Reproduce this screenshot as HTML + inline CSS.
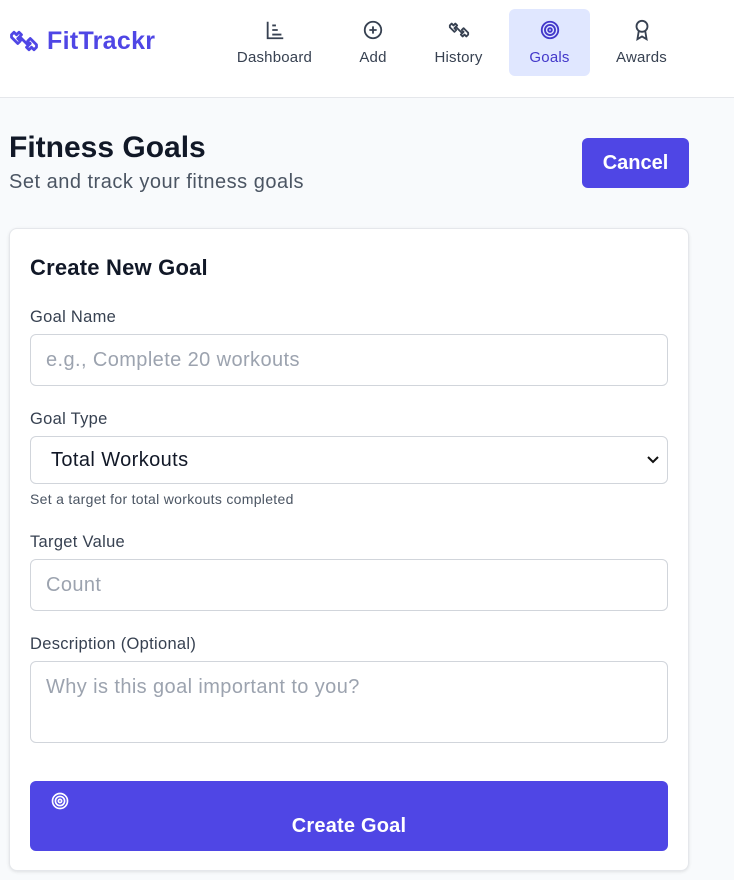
<!DOCTYPE html>
<html><head><style>
*{box-sizing:border-box;margin:0;padding:0}
body{width:734px;height:880px;overflow:hidden;background:#f8fafc;font-family:"Liberation Sans",sans-serif;color:#111827}
.hdr{height:98px;background:#fff;border-bottom:1px solid #e5e7eb;position:relative}
.logo{position:absolute;left:9px;top:26px;display:flex;align-items:center;gap:8px;color:#4f46e5;font-weight:bold;font-size:25px;letter-spacing:0.3px}
.nav{position:absolute;top:9px;left:0;width:734px}
.it{position:absolute;top:0;height:67px;text-align:center;font-size:15px;color:#374151;letter-spacing:0.2px}
.it svg{position:absolute;top:10px;left:50%;margin-left:-11px}
.it span{position:absolute;top:40px;left:0;right:0}
.act{background:#e0e7ff;border-radius:6px;color:#4338ca}
h1{position:absolute;left:9px;top:131px;font-size:30px;font-weight:bold}
.sub{position:absolute;left:9px;top:171px;font-size:20px;color:#4b5563;letter-spacing:0.5px}
.cancel{position:absolute;left:582px;top:138px;width:107px;height:50px;background:#4f46e5;color:#fff;border-radius:6px;font-size:20px;text-align:center;line-height:50px;font-weight:bold}
.card{position:absolute;left:9px;top:228px;width:680px;height:643px;background:#fff;border:1px solid #e5e7eb;border-radius:8px;box-shadow:0 1px 3px rgba(0,0,0,.1)}
.t{position:absolute;left:20px;font-size:22px;font-weight:bold;top:26px;letter-spacing:0.2px}
.l{position:absolute;left:20px;font-size:16.5px;color:#374151;letter-spacing:0.3px}
.in{position:absolute;left:20px;width:638px;border:1px solid #d1d5db;border-radius:6px;font-size:20px;color:#9ca3af;padding-left:15px;letter-spacing:0.4px}
.btn{position:absolute;left:20px;top:552px;width:638px;height:70px;background:#4f46e5;border-radius:6px;color:#fff;font-size:20px;text-align:center;font-weight:bold;letter-spacing:0.2px}
</style></head><body>
<div class="hdr">
<div class="logo"><svg width="30" height="30" viewBox="0 0 24 24" fill="none" stroke="#4f46e5" stroke-width="2.2" stroke-linecap="round" stroke-linejoin="round"><path d="M2 7l2-2 2 2 2-2 2 2-3 3 2 2-2 2-2-2-3-3zM22 17l-2 2-2-2-2 2-2-2 3-3-2-2 2-2 2 2 3 3zM9 9l6 6"/></svg>FitTrackr</div>
<div class="nav">
<div class="it" style="left:226px;width:97px"><svg width="22" height="22" viewBox="0 0 24 24" fill="none" stroke="#374151" stroke-width="2"><path d="M4 3v18h17M9 17h10M9 12h6M9 7h4"/></svg><span>Dashboard</span></div>
<div class="it" style="left:344px;width:58px"><svg width="22" height="22" viewBox="0 0 24 24" fill="none" stroke="#374151" stroke-width="2"><circle cx="12" cy="12" r="9"/><path d="M12 8v8M8 12h8"/></svg><span>Add</span></div>
<div class="it" style="left:420px;width:77px"><svg width="22" height="22" viewBox="0 0 24 24" fill="none" stroke="#374151" stroke-width="2" stroke-linejoin="round"><path d="M2 7l2-2 2 2 2-2 2 2-3 3 2 2-2 2-2-2-3-3zM22 17l-2 2-2-2-2 2-2-2 3-3-2-2 2-2 2 2 3 3zM9 9l6 6"/></svg><span>History</span></div>
<div class="it act" style="left:509px;width:81px"><svg width="22" height="22" viewBox="0 0 24 24" fill="none" stroke="#4338ca" stroke-width="2"><circle cx="12" cy="12" r="9"/><circle cx="12" cy="12" r="5.5"/><circle cx="12" cy="12" r="2"/></svg><span>Goals</span></div>
<div class="it" style="left:605px;width:73px"><svg width="22" height="22" viewBox="0 0 24 24" fill="none" stroke="#374151" stroke-width="2"><circle cx="12" cy="8" r="6"/><path d="M8.5 13L7 22l5-3 5 3-1.5-9"/></svg><span>Awards</span></div>
</div></div>
<h1>Fitness Goals</h1>
<div class="sub">Set and track your fitness goals</div>
<div class="cancel">Cancel</div>
<div class="card">
<div class="t">Create New Goal</div>
<div class="l" style="top:79px">Goal Name</div>
<div class="in" style="top:105px;height:52px;line-height:50px">e.g., Complete 20 workouts</div>
<div class="l" style="top:181px">Goal Type</div>
<div class="in" style="top:207px;height:48px;line-height:46px;color:#111827;padding-left:20px">Total Workouts<svg style="position:absolute;right:8px;top:18px" width="12" height="10" viewBox="0 0 12 10"><path d="M1 2l5 5 5-5" fill="none" stroke="#111" stroke-width="2"/></svg></div>
<div class="l" style="top:262px;font-size:14px;color:#4b5563;letter-spacing:0.3px">Set a target for total workouts completed</div>
<div class="l" style="top:304px">Target Value</div>
<div class="in" style="top:330px;height:52px;line-height:50px">Count</div>
<div class="l" style="top:406px">Description (Optional)</div>
<div class="in" style="top:432px;height:82px;line-height:normal;padding-top:14px">Why is this goal important to you?</div>
<div class="btn"><svg style="position:absolute;left:20px;top:10px" width="20" height="20" viewBox="0 0 24 24" fill="none" stroke="#fff" stroke-width="2"><circle cx="12" cy="12" r="9"/><circle cx="12" cy="12" r="5.5"/><circle cx="12" cy="12" r="2"/></svg><span style="position:absolute;left:0;right:0;top:34px">Create Goal</span></div>
</div>
</body></html>
